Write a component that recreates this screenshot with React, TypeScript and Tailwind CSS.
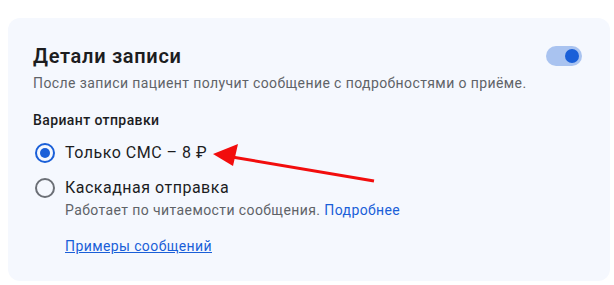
import { useState } from 'react'

function Radio({ checked }: { checked: boolean }) {
  return (
    <span
      className={
        checked
          ? 'flex h-5 w-5 shrink-0 items-center justify-center rounded-full border-2 border-[#1a5fd8]'
          : 'flex h-5 w-5 shrink-0 items-center justify-center rounded-full border-2 border-[#6b6f76]'
      }
    >
      {checked ? <span className="h-[10px] w-[10px] rounded-full bg-[#1a5fd8]" /> : null}
    </span>
  )
}

export default function App() {
  const [enabled] = useState(true)
  const [variant, setVariant] = useState<'sms' | 'cascade'>('sms')

  return (
    <div className="relative h-[285px] w-[614px] bg-white pt-[18px] pl-2 pr-1 font-['Roboto',sans-serif] text-[#1c1d1f]">
      <div className="h-[263px] rounded-xl bg-[#f5f8fe] pl-[25px] pr-7 pt-[23px]">
        <div className="flex items-start justify-between">
          <h2 className="text-[20px] leading-[30px] font-semibold tracking-[0.7px]">Детали записи</h2>
          <button
            className="mt-[5px] flex h-5 w-9 items-center justify-end rounded-full bg-[#a9c3f0] pr-[3px]"
            aria-pressed={enabled}
          >
            <span className="h-[14px] w-[14px] rounded-full bg-[#1a5fd8]" />
          </button>
        </div>
        <p className="mt-[2px] text-[14px] leading-5 tracking-[0.4px] text-[#5f6368]">
          После записи пациент получит сообщение с подробностями о приёме.
        </p>

        <p className="mt-[17px] text-[14px] leading-5 font-medium tracking-[0.4px]">Вариант отправки</p>

        <div className="mt-[11px] flex flex-col">
          <label className="flex items-center gap-[10px] pl-[2px]" onClick={() => setVariant('sms')}>
            <Radio checked={variant === 'sms'} />
            <span className="text-[16px] leading-6 tracking-[0.5px]">Только СМС – 8 ₽</span>
          </label>
          <label className="mt-[11px] flex items-center gap-[10px] pl-[2px]" onClick={() => setVariant('cascade')}>
            <Radio checked={variant === 'cascade'} />
            <span className="text-[16px] leading-6 tracking-[0.5px]">Каскадная отправка</span>
          </label>
          <p className="pl-[32px] text-[14px] leading-5 tracking-[0.4px] text-[#5f6368]">
            Работает по читаемости сообщения.{' '}
            <a href="#" className="text-[#1a5fd8]">
              Подробнее
            </a>
          </p>
          <a href="#" className="mt-4 pl-[32px] text-[14px] leading-5 tracking-[0.4px] text-[#1a5fd8] underline">
            Примеры сообщений
          </a>
        </div>
      </div>

      <svg className="pointer-events-none absolute left-0 top-0" width="614" height="285" viewBox="0 0 614 285">
        <line x1="374" y1="181" x2="232" y2="157" stroke="#f20d0d" strokeWidth="3" />
        <polygon points="213,154 238,144 233,166" fill="#f20d0d" />
      </svg>
    </div>
  )
}
